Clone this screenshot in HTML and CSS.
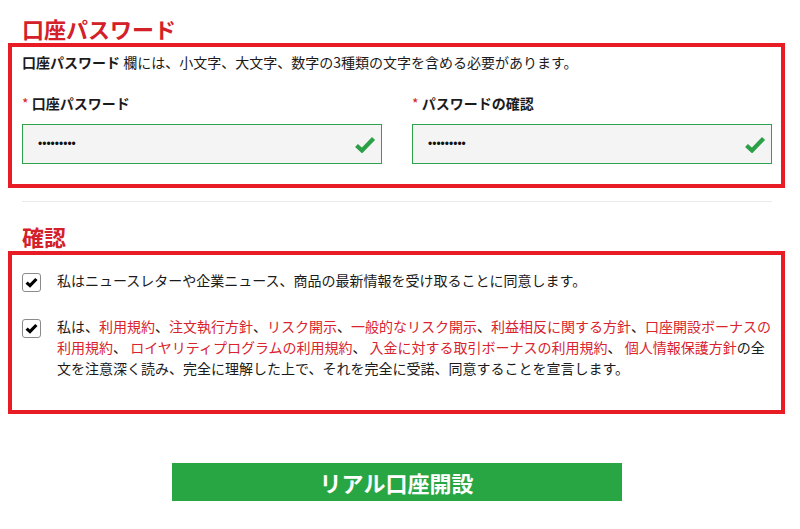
FILE: index.html
```html
<!DOCTYPE html>
<html lang="ja">
<head>
<meta charset="utf-8">
<title>口座パスワード</title>
<link rel="stylesheet" href="styles.css">
</head>
<body>
<div class="page">
  <h2 class="section-title">口座パスワード</h2>
  <div class="panel panel-password">
    <p class="hint"><b>口座パスワード</b> 欄には、小文字、大文字、数字の3種類の文字を含める必要があります。</p>
    <div class="fields">
      <div class="field">
        <label class="label"><span class="req">*</span> 口座パスワード</label>
        <div class="input-wrap">
          <input class="input" type="password" value="Abcdef123" readonly>
          <svg class="ok" width="22" height="17" viewBox="0 0 22 17"><path d="M2.5 9.5 L8 14.5 L19.5 2.5" fill="none" stroke="#2ba046" stroke-width="4.2" stroke-linecap="butt" stroke-linejoin="miter"/></svg>
        </div>
      </div>
      <div class="field">
        <label class="label"><span class="req">*</span> パスワードの確認</label>
        <div class="input-wrap">
          <input class="input" type="password" value="Abcdef123" readonly>
          <svg class="ok" width="22" height="17" viewBox="0 0 22 17"><path d="M2.5 9.5 L8 14.5 L19.5 2.5" fill="none" stroke="#2ba046" stroke-width="4.2" stroke-linecap="butt" stroke-linejoin="miter"/></svg>
        </div>
      </div>
    </div>
  </div>
  <hr class="divider">
  <h2 class="section-title">確認</h2>
  <div class="panel panel-confirm">
    <div class="check-row row-first">
      <span class="box"><svg width="13" height="11" viewBox="0 0 13 11"><path d="M1.6 5.6 L5 8.6 L11.4 2" fill="none" stroke="#000" stroke-width="3.2"/></svg></span>
      <p class="check-text">私はニュースレターや企業ニュース、商品の最新情報を受け取ることに同意します。</p>
    </div>
    <div class="check-row">
      <span class="box"><svg width="13" height="11" viewBox="0 0 13 11"><path d="M1.6 5.6 L5 8.6 L11.4 2" fill="none" stroke="#000" stroke-width="3.2"/></svg></span>
      <p class="check-text">私は、<a href="#">利用規約</a>、<a href="#">注文執行方針</a>、<a href="#">リスク開示</a>、<a href="#">一般的なリスク開示</a>、<a href="#">利益相反に関する方針</a>、<a href="#">口座開設ボーナスの利用規約</a>、 <a href="#">ロイヤリティプログラムの利用規約</a>、 <a href="#">入金に対する取引ボーナスの利用規約</a>、 <a href="#">個人情報保護方針</a>の全文を注意深く読み、完全に理解した上で、それを完全に受諾、同意することを宣言します。</p>
    </div>
  </div>
  <div class="actions">
    <button class="submit" type="button">リアル口座開設</button>
  </div>
</div>
</body>
</html>
```
FILE: styles.css
```css
html, body {
  margin: 0;
  padding: 0;
  background: #fff;
}
body {
  font-family: "Noto Sans CJK JP", "Noto Sans", sans-serif;
  color: #1b1b1b;
  font-size: 14px;
}
.page {
  width: 777px;
  margin-left: 8px;
  padding-top: 14px;
}
.section-title {
  margin: 0 0 0 14px;
  font-size: 22px;
  line-height: 29px;
  font-weight: 700;
  color: #d42029;
  text-spacing-trim: space-all;
}
.panel {
  border: 4px solid #e81c24;
}
.panel-password {
  padding: 5px 9px 20px 10px;
}
.hint {
  margin: 0;
  font-size: 14px;
  line-height: 20px;
  text-spacing-trim: space-all;
}
.hint b {
  font-weight: 700;
}
.fields {
  display: grid;
  grid-template-columns: 360px 360px;
  column-gap: 30px;
  margin-top: 21px;
}
.label {
  display: block;
  font-weight: 700;
  font-size: 14px;
  line-height: 20px;
  margin-bottom: 11px;
}
.req {
  color: #d42029;
  font-weight: 400;
}
.input-wrap {
  position: relative;
  height: 40px;
}
.input {
  box-sizing: border-box;
  width: 100%;
  height: 40px;
  margin: 0;
  border: 1px solid #2ea24a;
  background: #f4f4f4;
  padding: 0 40px 0 15px;
  font-family: "Liberation Sans", sans-serif;
  font-size: 12px;
  color: #111;
  outline: none;
}
.ok {
  position: absolute;
  right: 6px;
  top: 12px;
}
.divider {
  margin: 13px 13px 20px 14px;
  border: 0;
  border-top: 1px solid #e9e9e9;
  height: 0;
}
.panel-confirm {
  padding: 15px 4px 31px 10px;
}
.check-row {
  display: flex;
  align-items: flex-start;
  gap: 16px;
}
.check-row + .check-row {
  margin-top: 24px;
}
.box {
  flex: none;
  box-sizing: border-box;
  width: 19px;
  height: 19px;
  margin-top: 3px;
  border: 1px solid #8a8a8a;
  border-radius: 3px;
  background: #fff;
  display: flex;
  align-items: center;
  justify-content: center;
}
.check-text {
  flex: none;
  margin: 0;
  font-size: 14px;
  line-height: 21px;
  width: 720px;
  text-spacing-trim: space-all;
}
.check-text a {
  color: #d9232e;
  text-decoration: none;
}
.actions {
  display: flex;
  justify-content: center;
  margin-top: 49px;
}
.submit {
  width: 450px;
  height: 38px;
  border: 0;
  background: #29a644;
  color: #fff;
  font-family: "Noto Sans CJK JP", sans-serif;
  font-size: 22px;
  font-weight: 700;
  padding: 0;
  cursor: pointer;
}
```
